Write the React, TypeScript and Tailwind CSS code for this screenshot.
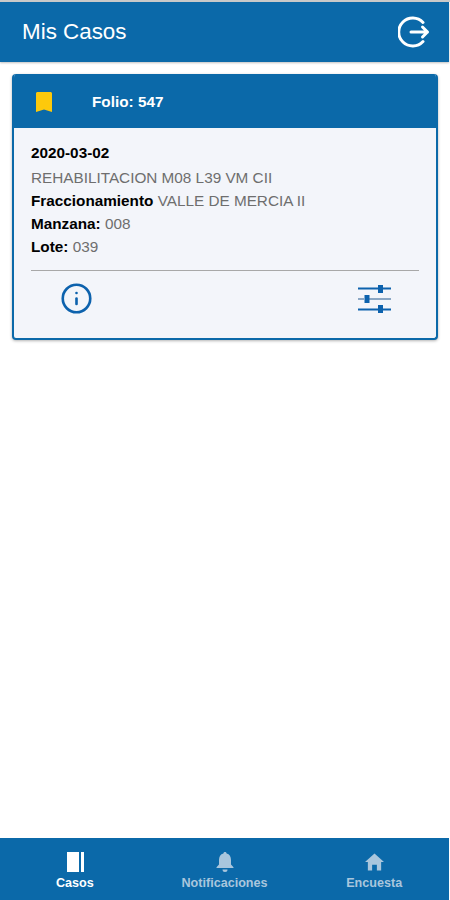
import { Info } from "lucide-react";

const font = { fontFamily: '"Liberation Sans", Arial, sans-serif' };

function ExitIcon() {
  return (
    <svg width="32" height="32" viewBox="0 0 32 32" fill="none" stroke="currentColor" strokeLinecap="round" strokeLinejoin="round">
      <path d="M25 6.500A14 14 0 1 0 25 25.500" strokeWidth="3" />
      <path d="M13 16H29.500M24.500 11 29.500 16 24.500 21" strokeWidth="3" />
    </svg>
  );
}

function SlidersIcon() {
  return (
    <svg width="33" height="28" viewBox="0 0 33 28" fill="none" stroke="#0d62ad">
      <path d="M0 3.500H20M25 3.500H33" strokeWidth="2" />
      <path d="M0 14H6M11 14H33" strokeWidth="2" stroke="#8ba7c4" />
      <path d="M0 24.500H20M25 24.500H33" strokeWidth="2" />
      <rect x="20.500" y="0.500" width="4" height="7" fill="#0d62ad" strokeWidth="1" />
      <rect x="7" y="10.500" width="4" height="7" fill="#0d62ad" strokeWidth="1" />
      <rect x="20.500" y="20.500" width="4" height="7" fill="#0d62ad" strokeWidth="1" />
    </svg>
  );
}

function NavItem({ icon, label, active }: { icon: React.ReactNode; label: string; active?: boolean }) {
  return (
    <div className={`flex flex-1 flex-col items-center pt-[13px] ${active ? "text-white" : "text-[#a9c6dd]"}`}>
      <div className="flex h-[22px] items-center justify-center">{icon}</div>
      <span className="mt-[2px] text-[12.600px] font-bold leading-[16px]">{label}</span>
    </div>
  );
}

export default function App() {
  return (
    <div className="relative flex h-[900px] w-[450px] flex-col overflow-hidden bg-white pr-px" style={font}>
      <header className="mt-[2px] flex h-[60px] shrink-0 items-center justify-between bg-[#0b69a9] pl-[22px] pr-[19px] text-white shadow-[0_1px_2px_rgba(0,0,0,0.25)]">
        <h1 className="text-[22.400px] font-normal leading-none">Mis Casos</h1>
        <ExitIcon />
      </header>

      <main className="flex-1 pl-3 pr-[11px] pt-3">
        <div className="overflow-hidden rounded border-2 border-t-0 border-[#0b69a9] bg-[#f3f5fa] shadow-[0_1px_3px_rgba(0,0,0,0.3)]">
          <div className="flex h-[54px] items-center bg-[#0b69a9] pt-px text-white">
            <svg className="ml-[22px]" width="16" height="20" viewBox="0 0 16 20" fill="#fdc90b">
              <path d="M0 1.500C0 .7.7 0 1.500 0h13c.8 0 1.500.7 1.500 1.500V20l-8-2.500L0 20Z" />
            </svg>
            <span className="ml-[40px] mt-[2px] text-[15.300px] font-bold">Folio: 547</span>
          </div>
          <div className="px-[17px] pb-[23px] pt-[13px] text-[15.300px] leading-[23px] text-[#6e6e6e]">
            <p className="mb-[2px] font-bold text-black">2020-03-02</p>
            <p>REHABILITACION M08 L39 VM CII</p>
            <p>
              <b className="text-black">Fraccionamiento</b> VALLE DE MERCIA II
            </p>
            <p>
              <b className="text-black">Manzana:</b> 008
            </p>
            <p>
              <b className="text-black">Lote:</b> 039
            </p>
            <div className="mt-[12px] border-t border-[#a8a8a8]" />
            <div className="flex items-center justify-between pl-[29px] pr-[28px] pt-[11px]">
              <Info size={33} strokeWidth={1.9} className="text-[#0d62ad]" />
              <SlidersIcon />
            </div>
          </div>
        </div>
      </main>

      <nav className="flex h-[62px] shrink-0 bg-[#0b69a9]">
        <NavItem
          active
          label="Casos"
          icon={
            <svg className="ml-px" width="17" height="20" viewBox="0 0 17 20" fill="currentColor">
              <rect x="0" y="0" width="12" height="20" />
              <rect x="14" y="0" width="3" height="20" />
            </svg>
          }
        />
        <NavItem
          label="Notificaciones"
          icon={
            <svg width="18" height="20" viewBox="0 0 18 20" fill="currentColor">
              <path d="M9 0c1 0 1.600.7 1.600 1.600C13.600 2.300 15 5 15 8v4.500l2.500 2.800V16H.5v-.7L3 12.500V8c0-3 1.400-5.700 4.400-6.400C7.400.7 8 0 9 0Z" />
              <path d="M6.500 17.500h5A2.500 2.500 0 0 1 9 20a2.500 2.500 0 0 1-2.500-2.500Z" />
            </svg>
          }
        />
        <NavItem
          label="Encuesta"
          icon={
            <svg width="19" height="18" viewBox="0 0 20 18" fill="currentColor">
              <path d="M10 0 20 9h-3v9h-4.500v-6h-5v6H3V9H0Z" />
            </svg>
          }
        />
      </nav>
      <div className="absolute left-0 right-0 top-0 h-[2px] bg-[#c9c9c9]" />
    </div>
  );
}
